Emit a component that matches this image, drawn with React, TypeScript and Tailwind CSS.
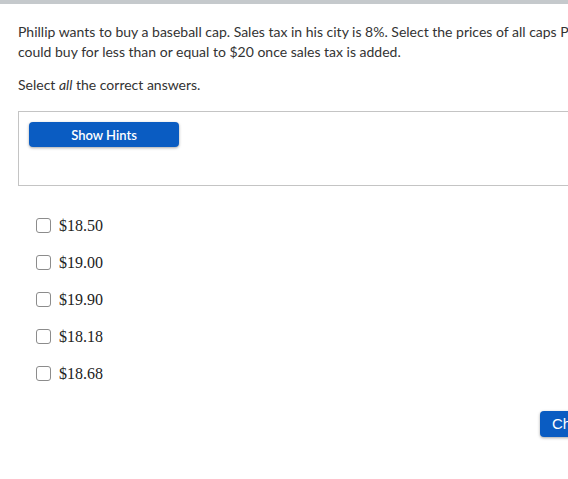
import React from "react";

const options = ["$18.50", "$19.00", "$19.90", "$18.18", "$18.68"];

export default function App() {
  return (
    <div className="w-[568px] h-[479px] overflow-hidden bg-white">
      <div className="h-[4px] w-full bg-[#c5c9cc]" />
      <div className="w-[660px] pl-[18px] pr-[40px] pt-[18px] text-[14px] leading-[20px] text-[#333333]" style={{ fontFamily: "Lato, 'Noto Sans', sans-serif" }}>
        <p className="w-[598px]">
          Phillip wants to buy a baseball cap. Sales tax in his city is 8%. Select the prices of all caps Phillip could buy for less than or equal to $20 once sales tax is added.
        </p>
        <p className="mt-[13px]">
          Select <em>all</em> the correct answers.
        </p>
        <div className="mt-[16px] h-[75px] border border-[#c4c4c4] pl-[10px] pt-[10px]">
          <button className="h-[25px] w-[150px] rounded-[4px] bg-[#0a5cc2] text-[13px] font-semibold text-white shadow-[0_1px_3px_rgba(0,0,0,0.35)]">
            Show Hints
          </button>
        </div>
        <div className="mt-[29px] flex flex-col gap-[16px] pl-[18px]">
          {options.map((o) => (
            <label key={o} className="flex h-[21px] items-center gap-[8px]">
              <span className="h-[15px] w-[15px] rounded-[3px] border-[1.5px] border-[#8c8c8c] bg-white" />
              <span className="text-[16px] text-[#222]" style={{ fontFamily: "'Liberation Serif', 'DejaVu Serif', serif" }}>{o}</span>
            </label>
          ))}
        </div>
        <div className="mt-[27px] flex">
          <button className="ml-[522px] h-[26px] rounded-[4px] bg-[#0a5cc2] px-[12px] text-[15px] text-white shadow-[0_1px_3px_rgba(0,0,0,0.35)]" style={{ fontFamily: "'Liberation Sans', Arial, sans-serif" }}>
            Check
          </button>
        </div>
      </div>
    </div>
  );
}
